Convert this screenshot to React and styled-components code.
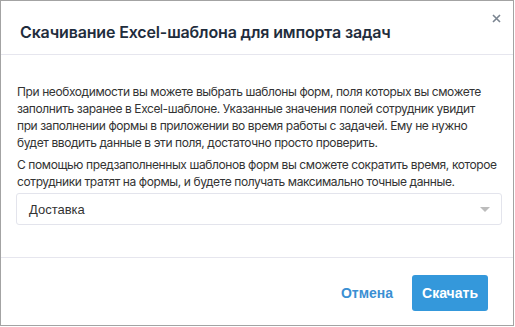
import React from 'react';
import styled, { createGlobalStyle } from 'styled-components';

const Global = createGlobalStyle`
  html, body {
    margin: 0;
    padding: 0;
    background: #fff;
  }
`;

const S = {
  Dialog: styled.div`
    box-sizing: border-box;
    width: 514px;
    height: 326px;
    border: 1px solid #a3a3a3;
    background: #fff;
    display: flex;
    flex-direction: column;
    font-family: Inter, "Noto Sans", sans-serif;
    position: relative;
  `,
  Header: styled.div`
    height: 54px;
    border-bottom: 1px solid #e6e6ee;
    display: flex;
    align-items: center;
    padding: 0 19px;
    box-sizing: border-box;
    flex-shrink: 0;
  `,
  Title: styled.h2`
    margin: 0;
    padding-top: 8px;
    font-size: 16px;
    letter-spacing: -0.15px;
    font-weight: 600;
    color: #1f2d3d;
  `,
  Close: styled.button`
    position: absolute;
    top: 10px;
    right: 10px;
    width: 14px;
    height: 14px;
    padding: 0;
    border: 0;
    background: none;
    display: flex;
    align-items: center;
    justify-content: center;
  `,
  Body: styled.div`
    padding: 28px 11px 0 15px;
    flex: 1;
    display: flex;
    flex-direction: column;
    gap: 5px;
  `,
  Paragraph: styled.p`
    margin: 0;
    padding-left: 1px;
    font-size: 12px;
    letter-spacing: -0.4px;
    line-height: 17px;
    color: #333;
  `,
  Select: styled.div`
    margin-top: -2px;
    height: 32px;
    box-sizing: border-box;
    border: 1px solid #e3e4ec;
    border-radius: 3px;
    display: flex;
    align-items: center;
    justify-content: space-between;
    padding: 0 11px 0 12px;
    font-family: "Liberation Sans", Arial, sans-serif;
    font-size: 13px;
    color: #333;
  `,
  Caret: styled.span`
    width: 0;
    height: 0;
    border-left: 5px solid transparent;
    border-right: 5px solid transparent;
    border-top: 5px solid #bcbcbc;
  `,
  Footer: styled.div`
    height: 68px;
    border-top: 1px solid #e6e6ee;
    display: flex;
    align-items: center;
    justify-content: flex-end;
    gap: 6px;
    padding: 3px 25px 0 0;
    box-sizing: border-box;
    flex-shrink: 0;
  `,
  Button: styled.button`
    height: 36px;
    padding: 0 ${(p) => (p.$primary ? '10px' : '13px')};
    border: 0;
    border-radius: 3px;
    font-family: "Liberation Sans", Arial, sans-serif;
    font-size: 14px;
    font-weight: 700;
    cursor: pointer;
    color: ${(p) => (p.$primary ? '#fff' : '#3a8fd3')};
    background: ${(p) => (p.$primary ? '#3498db' : 'transparent')};
  `,
};

const App = () => (
  <>
    <Global />
    <S.Dialog>
      <S.Header>
        <S.Title>Скачивание Excel-шаблона для импорта задач</S.Title>
        <S.Close aria-label="Закрыть">
          <svg width="9" height="9" viewBox="0 0 9 9">
            <path d="M1 1L8 8M8 1L1 8" stroke="#7a8490" strokeWidth="1.6" />
          </svg>
        </S.Close>
      </S.Header>
      <S.Body>
        <S.Paragraph>
          При необходимости вы можете выбрать шаблоны форм, поля которых вы сможете<br />
          заполнить заранее в Excel-шаблоне. Указанные значения полей сотрудник увидит<br />
          при заполнении формы в приложении во время работы с задачей. Ему не нужно<br />
          будет вводить данные в эти поля, достаточно просто проверить.
        </S.Paragraph>
        <S.Paragraph>
          С помощью предзаполненных шаблонов форм вы сможете сократить время, которое<br />
          сотрудники тратят на формы, и будете получать максимально точные данные.
        </S.Paragraph>
        <S.Select>
          <span>Доставка</span>
          <S.Caret />
        </S.Select>
      </S.Body>
      <S.Footer>
        <S.Button>Отмена</S.Button>
        <S.Button $primary>Скачать</S.Button>
      </S.Footer>
    </S.Dialog>
  </>
);

export default App;
